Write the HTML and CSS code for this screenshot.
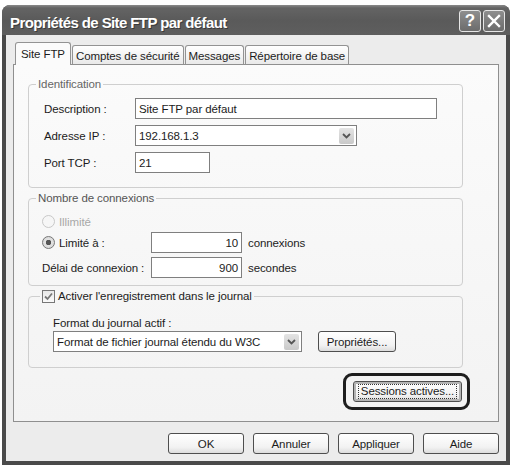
FILE: index.html
```html
<!DOCTYPE html>
<html lang="fr">
<head>
    <meta charset="UTF-8">
    <title>Propriétés de Site FTP par défaut</title>
    <link rel="stylesheet" href="styles.css">
</head>
<body>
    <div class="window">
        <div class="titlebar">
            <span class="title">Propriétés de Site FTP par défaut</span>
            <div class="title-buttons">
                <span class="title-btn help">?</span>
                <span class="title-btn close">
                    <svg width="20" height="20" viewBox="0 0 20 20">
                        <path d="M5 5 L15 15 M15 5 L5 15" stroke="#fff" stroke-width="2.4" stroke-linecap="square"/>
                    </svg>
                </span>
            </div>
        </div>

        <div class="window-body">
            <!-- Tabs -->
            <div class="tabs">
                <div class="tab active">Site FTP</div>
                <div class="tab">Comptes de sécurité</div>
                <div class="tab">Messages</div>
                <div class="tab">Répertoire de base</div>
            </div>

            <div class="panel">
                <fieldset class="group group-ident">
                    <legend>Identification</legend>
                    <div class="row">
                        <span class="label">Description :</span>
                        <div class="field field-desc">Site FTP par défaut</div>
                    </div>
                    <div class="row">
                        <span class="label">Adresse IP :</span>
                        <div class="field combo combo-ip">
                            <span>192.168.1.3</span>
                            <span class="combo-arrow">
                                <svg width="9" height="6" viewBox="0 0 9 6"><path d="M1 1 L4.5 4.5 L8 1" fill="none" stroke="#555" stroke-width="1.8"/></svg>
                            </span>
                        </div>
                    </div>
                    <div class="row">
                        <span class="label">Port TCP :</span>
                        <div class="field field-port">21</div>
                    </div>
                </fieldset>

                <fieldset class="group group-conn">
                    <legend>Nombre de connexions</legend>
                    <div class="row row-radio">
                        <span class="radio disabled"></span>
                        <span class="muted">Illimité</span>
                    </div>
                    <div class="row">
                        <span class="label label-wide">
                            <span class="radio checked"></span>
                            <span>Limité à :</span>
                        </span>
                        <div class="field field-num">10</div>
                        <span class="unit">connexions</span>
                    </div>
                    <div class="row">
                        <span class="label label-wide">Délai de connexion :</span>
                        <div class="field field-num">900</div>
                        <span class="unit">secondes</span>
                    </div>
                </fieldset>

                <fieldset class="group group-log">
                    <legend>
                        <span class="checkbox">
                            <svg width="11" height="11" viewBox="0 0 11 11"><path d="M2 5.5 L4.5 8 L9 2.5" fill="none" stroke="#777" stroke-width="1.8"/></svg>
                        </span>
                        <span>Activer l'enregistrement dans le journal</span>
                    </legend>
                    <div class="log-label">Format du journal actif :</div>
                    <div class="row">
                        <div class="field combo combo-log">
                            <span>Format de fichier journal étendu du W3C</span>
                            <span class="combo-arrow">
                                <svg width="9" height="6" viewBox="0 0 9 6"><path d="M1 1 L4.5 4.5 L8 1" fill="none" stroke="#555" stroke-width="1.8"/></svg>
                            </span>
                        </div>
                        <button class="btn btn-props">Propriétés...</button>
                    </div>
                </fieldset>

                <!-- highlighted button -->
                <div class="highlight">
                    <button class="btn btn-sessions"><span class="focus">Sessions actives...</span></button>
                </div>
            </div>

            <div class="dialog-buttons">
                <button class="btn">OK</button>
                <button class="btn">Annuler</button>
                <button class="btn">Appliquer</button>
                <button class="btn">Aide</button>
            </div>
        </div>
    </div>
</body>
</html>
```

FILE: styles.css
```css
* {
    box-sizing: border-box;
}

body {
    margin: 0;
    background: #fff;
    font-family: "Liberation Sans", Arial, sans-serif;
    font-size: 11.5px;
    letter-spacing: -0.1px;
    color: #1c1c1c;
}

/* Window frame */
.window {
    width: 508px;
    height: 460px;
    margin: 5px 0 0 2px;
    display: flex;
    flex-direction: column;
    background: #4a4a4a;
    border-radius: 8px 8px 0 0;
    padding-bottom: 4px;
}

.titlebar {
    height: 30px;
    display: flex;
    align-items: flex-start;
    justify-content: space-between;
    padding: 0 5px 0 8px;
    border-radius: 8px 8px 0 0;
    background: linear-gradient(#8a8a8a 0, #646464 3px, #5a5a5a 50%, #5e5e5e 100%);
}

.title {
    margin-top: 9px;
    line-height: 17px;
    font-size: 15px;
    font-weight: bold;
    letter-spacing: -0.6px;
    color: #fff;
    text-shadow: 1px 1px 0 #3a3a3a;
}

.title-buttons {
    display: flex;
    gap: 2px;
    margin-top: 5px;
}

.title-btn {
    width: 22px;
    height: 22px;
    display: flex;
    align-items: center;
    justify-content: center;
    border: 1px solid #e6e6e6;
    border-radius: 3px;
    background: linear-gradient(#8e8e8e, #6c6c6c);
    color: #fff;
    font-size: 17px;
    font-weight: bold;
    letter-spacing: 0;
}

.window-body {
    flex: 1;
    margin: 0 4px;
    padding: 7px 7px 0;
    display: flex;
    flex-direction: column;
    background: #ececec;
}

/* Tabs */
.tabs {
    height: 22px;
    display: flex;
    align-items: flex-end;
    gap: 1px;
    padding-left: 2px;
}

.tab {
    height: 19px;
    padding: 2px 3px 0;
    line-height: 17px;
    border: 1px solid #939393;
    border-bottom: none;
    border-radius: 3px 3px 0 0;
    background: linear-gradient(#ffffff, #e9e9e9);
    white-space: nowrap;
}

.tab.active {
    height: 23px;
    margin-bottom: -1px;
    padding: 2px 5px 0;
    line-height: 18px;
    background: #fbfbfb;
    position: relative;
    z-index: 1;
}

.panel {
    display: flex;
    flex-direction: column;
    padding: 12px 35px 11px 14px;
    border: 1px solid #8f8f8f;
    background: linear-gradient(#fbfbfb, #f3f3f3);
}

/* Group boxes */
.group {
    margin: 0;
    min-width: 0;
    border: 1px solid #cfcfcf;
    border-radius: 4px;
    display: flex;
    flex-direction: column;
}

.group legend {
    padding: 0 2px;
    line-height: 14px;
}

.group-ident {
    padding: 7px 0 14px 15px;
    gap: 6px;
}

.group-ident legend {
    margin-left: -8px;
    color: #666;
}

.group-conn {
    margin-top: 3px;
    padding: 8px 0 7px 13px;
}

.group-conn legend {
    margin-left: -6px;
    color: #555;
}

.group-log {
    margin-top: 3px;
    padding: 13px 0 15px 24px;
}

.group-log legend {
    margin-left: -13px;
    display: flex;
    align-items: center;
    gap: 3px;
}

.row {
    display: flex;
    align-items: center;
}

.label {
    width: 91px;
    flex-shrink: 0;
}

.label-wide {
    width: 109px;
    display: flex;
    align-items: center;
    gap: 4px;
}

.row-radio {
    height: 17px;
    gap: 4px;
    margin-bottom: 2px;
}

.group-conn .row + .row + .row {
    margin-top: 4px;
}

/* Text fields */
.field {
    height: 21px;
    display: flex;
    align-items: center;
    padding: 0 3px;
    border: 1px solid #7f7f7f;
    background: #fff;
    white-space: nowrap;
}

.field-desc {
    width: 302px;
}

.field-port {
    width: 75px;
}

.field-num {
    width: 91px;
    justify-content: flex-end;
}

.unit {
    margin-left: 6px;
}

.combo {
    justify-content: space-between;
    padding-right: 2px;
}

.combo-ip {
    width: 222px;
}

.combo-log {
    width: 249px;
}

.combo-arrow {
    width: 15px;
    height: 16px;
    display: flex;
    align-items: center;
    justify-content: center;
    border-radius: 2px;
    background: linear-gradient(#e4e4e4, #c9c9c9);
}

.muted {
    color: #a8a8a8;
}

/* Radio and checkbox */
.radio {
    width: 13px;
    height: 13px;
    flex-shrink: 0;
    border: 1px solid #777;
    border-radius: 50%;
    background: radial-gradient(circle, #fff 30%, #dcdcdc 100%);
}

.radio.disabled {
    border-color: #c8c8c8;
    background: #f6f6f6;
}

.radio.checked {
    background: radial-gradient(circle, #555 0, #555 2.5px, #e2e2e2 3px, #d4d4d4 100%);
}

.checkbox {
    width: 13px;
    height: 13px;
    display: flex;
    align-items: center;
    justify-content: center;
    border: 1px solid #777;
    background: linear-gradient(#e8e8e8, #fafafa);
}

.log-label {
    line-height: 14px;
    margin-bottom: 1px;
}

/* Buttons */
.btn {
    height: 21px;
    padding: 0;
    font: inherit;
    letter-spacing: inherit;
    color: #1c1c1c;
    border: 1px solid #4e4e4e;
    border-radius: 3px;
    background: linear-gradient(#ffffff, #f2f2f2 70%, #dcdcdc);
}

.btn-props {
    width: 78px;
    margin-left: 16px;
}

.highlight {
    align-self: flex-end;
    margin: 5px -7px 0 0;
    padding: 5px 5px 5px 7px;
    border: 3px solid #1e1e1e;
    border-radius: 9px;
}

.btn-sessions {
    width: 109px;
    display: flex;
    align-items: center;
    justify-content: center;
    box-shadow: inset 0 0 0 2px #b4b4b4;
}

.btn-sessions .focus {
    padding: 0 2px;
    line-height: 13px;
    outline: 1px dotted #333;
}

.dialog-buttons {
    display: flex;
    justify-content: flex-end;
    gap: 9px;
    margin-top: 11px;
}

.dialog-buttons .btn {
    width: 76px;
}
```
